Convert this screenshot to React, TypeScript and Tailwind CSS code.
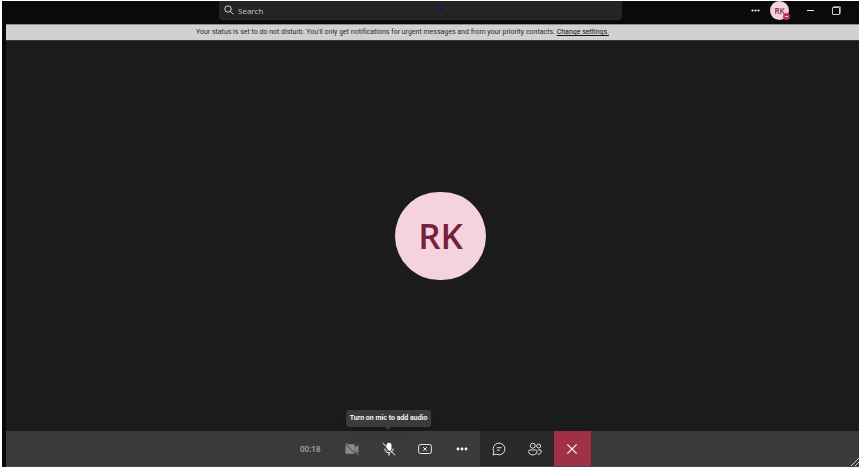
import type { ReactNode } from 'react'

const tools = [
  { id: 'camera', label: 'Turn camera on', icon: <CameraOffIcon /> },
  { id: 'mic', label: 'Unmute', icon: <MicOffIcon />, tip: 'Turn on mic to add audio' },
  { id: 'share', label: 'Stop sharing', icon: <StopShareIcon /> },
  { id: 'more', label: 'More actions', icon: <DotsIcon className="h-1 w-3" /> },
]

function SearchIcon() {
  return (
    <svg viewBox="0 0 10 10" className="h-[10px] w-[10px] shrink-0" fill="none" stroke="#d6d6d6" strokeWidth="1">
      <circle cx="4" cy="4" r="3.2" />
      <path d="M6.3 6.3 9.4 9.4" />
    </svg>
  )
}

function DotsIcon({ className }: { className: string }) {
  return (
    <svg viewBox="0 0 12 4" className={className} fill="#fff">
      <circle cx="2" cy="2" r="1.4" />
      <circle cx="6" cy="2" r="1.4" />
      <circle cx="10" cy="2" r="1.4" />
    </svg>
  )
}

function CameraOffIcon() {
  return (
    <svg viewBox="0 0 14 14" className="h-[14px] w-[14px]" fill="#8d8c8b">
      <path d="M1.8 2.2h6.6c.8 0 1.4.6 1.4 1.4v6.800c0 .8-.6 1.400-1.400 1.400H1.800C1 11.800.4 11.200.4 10.400V3.600c0-.8.6-1.400 1.400-1.400z" />
      <path d="M10.300 5.300 13.400 2.800v8.400l-3.100-2.500z" />
      <path d="M.2 1.800 12.600 14" stroke="#3b3b3b" strokeWidth="1" />
      <path d="M.8.8 13.400 13.200" stroke="#8d8c8b" strokeWidth="1" />
    </svg>
  )
}

function MicOffIcon() {
  return (
    <svg viewBox="0 0 14 14" className="h-[14px] w-[14px]" fill="none">
      <rect x="4.500" y=".8" width="5" height="8.200" rx="2.500" fill="#fff" />
      <path d="M2.800 6.600c0 2.500 1.800 4.200 4.200 4.200s4.200-1.700 4.200-4.200M7 10.800v2.800" stroke="#fff" strokeWidth="1" />
      <path d="M0 1.800 12 13.800" stroke="#3b3b3b" strokeWidth="1" />
      <path d="M.7 1 13.200 13.400" stroke="#fff" strokeWidth="1" />
    </svg>
  )
}

function StopShareIcon() {
  return (
    <svg viewBox="0 0 14 12" className="h-3 w-[14px]" fill="none" stroke="#e6e6e6" strokeWidth="1">
      <rect x=".6" y="1.500" width="12.800" height="9" rx="1.800" />
      <path d="M5.200 4.200l3.600 3.600M8.800 4.200 5.200 7.800" />
    </svg>
  )
}

function ChatIcon() {
  return (
    <svg viewBox="0 0 14 14" className="h-[14px] w-[14px]" fill="none" stroke="#e4e4e4" strokeWidth="1">
      <path d="M1 13l.9-3.100A5.900 5.900 0 1 1 4.300 12.200z" strokeLinejoin="round" />
      <path d="M4.800 5.700h4.800M4.800 8.200h3" />
    </svg>
  )
}

function PeopleIcon() {
  return (
    <svg viewBox="0 0 14 14" className="h-[14px] w-[14px]" fill="none" stroke="#e4e4e4" strokeWidth="1">
      <circle cx="4.800" cy="3.700" r="2.500" />
      <circle cx="10.700" cy="4" r="2" />
      <path d="M1.700 8h6.200c.6 0 1 .4 1 1v.6c0 2-1.700 3.300-4.100 3.300S.7 11.600.7 9.600V9c0-.6.400-1 1-1zM10 8h2.300c.6 0 1 .4 1 1 0 2.100-1.200 3.300-3.600 3.300" />
    </svg>
  )
}

function CloseIcon() {
  return (
    <svg viewBox="0 0 12 12" className="h-3 w-3" fill="none" stroke="#fff" strokeWidth="1.200">
      <path d="M1.300 1.300l9.400 9.400M10.700 1.300l-9.400 9.400" />
    </svg>
  )
}

function BarButton({ label, className = '', children }: { label: string; className?: string; children: ReactNode }) {
  return (
    <button type="button" aria-label={label} className={`relative flex items-center justify-center ${className}`}>
      {children}
    </button>
  )
}

function TitleBar() {
  return (
    <header className="flex h-[23px] items-start bg-[#0a0a0a]">
      <div className="flex-1" />
      <label className="relative flex h-[19px] w-[403px] items-center gap-1 rounded-b-sm border-b border-[#2e2e2e] bg-[#242424] pl-[5px]">
        <SearchIcon />
        <input
          type="search"
          aria-label="Search"
          placeholder="Search"
          className="w-full bg-transparent pt-px text-[8px] leading-3 outline-none placeholder:text-[#c8c8c8]"
        />
        <span className="absolute left-[221px] top-[7px] h-[2px] w-[2px] bg-[#0000e6]" />
      </label>
      <div className="flex h-[19px] w-[237px] items-center justify-end pr-[18px]">
        <button type="button" aria-label="Settings and more">
          <DotsIcon className="h-[3px] w-[9px]" />
        </button>
        <button
          type="button"
          aria-label="Account"
          className="relative ml-[10px] h-[19px] w-[19px] rounded-full bg-[#f4d3de] text-[8px] font-semibold leading-[19px] text-[#7a2644]"
        >
          RK
          <span className="absolute -right-px bottom-0 flex h-[7px] w-[7px] items-center justify-center rounded-full bg-[#c4314b]">
            <span className="h-px w-[3px] bg-[#f4d3de]" />
          </span>
        </button>
        <button type="button" aria-label="Minimize" className="ml-[18px] h-px w-[7px] bg-[#e8e8e8]" />
        <button type="button" aria-label="Restore" className="ml-[18px]">
          <svg viewBox="0 0 9 9" className="h-[9px] w-[9px]" fill="none" stroke="#d0d0d0" strokeWidth="1">
            <rect x=".5" y="1.500" width="7" height="7" rx=".5" />
            <path d="M1.500.5H8c.3 0 .5.2.5.5v6.500" stroke="#8a8a8a" />
          </svg>
        </button>
      </div>
    </header>
  )
}

export default function App() {
  return (
    <div className="flex h-screen flex-col bg-white pb-[2px] pl-[2px] pt-px font-['Open_Sans','Noto_Sans',sans-serif]">
      <TitleBar />
      <div className="flex min-h-0 flex-1 flex-col border-l-4 border-[#080808]">
        <div className="h-[17px] border-y border-b-[#3a3a3a] border-t-[#8e8e8e] bg-[#d1d1d1] pr-[60px] text-center font-['Roboto',sans-serif] text-[7px] leading-[15px] text-[#2d2d2d]">
          Your status is set to do not disturb. You'll only get notifications for urgent messages and from your priority
          contacts.{' '}
          <a href="#settings" className="text-[#151515] underline">
            Change settings.
          </a>
        </div>

        <main className="flex flex-1 items-center justify-center bg-[#1b1b1b] pl-4">
          <div className="flex h-[88px] w-[91px] items-center justify-center rounded-full bg-[#f4d3de] text-[35px] font-semibold text-[#76203f]">
            RK
          </div>
        </main>

        <footer className="relative flex h-9 justify-center border-b border-[#4a4948] bg-[#3c3a38]">
          <time className="w-[59px] pr-[13px] text-right text-[8px] font-semibold leading-9 text-[#a9a8a6]">00:18</time>
          <div className="grid w-[257px] grid-cols-7">
            {tools.map((tool) => (
              <BarButton key={tool.id} label={tool.label} className="bg-[#3b3b3b]">
                {tool.icon}
                {tool.tip && (
                  <span
                    role="tooltip"
                    className="absolute bottom-[39px] left-1/2 -translate-x-1/2 whitespace-nowrap rounded-[3px] bg-[#3b3b3b] px-1 font-['Roboto',sans-serif] text-[7px] font-semibold leading-[17px] text-white shadow-lg"
                  >
                    {tool.tip}
                    <span className="absolute left-1/2 top-full -translate-x-1/2 border-x-[3px] border-t-[3px] border-x-transparent border-t-[#3b3b3b]" />
                  </span>
                )}
              </BarButton>
            ))}
            <BarButton label="Show conversation" className="bg-[#292929]">
              <ChatIcon />
            </BarButton>
            <BarButton label="Show participants" className="bg-[#292929]">
              <PeopleIcon />
            </BarButton>
            <BarButton label="Leave" className="bg-[#a03045]">
              <CloseIcon />
            </BarButton>
          </div>
          <svg viewBox="0 0 8 8" className="absolute bottom-0 right-0 h-2 w-2" stroke="#c9c9c9" strokeWidth="1">
            <path d="M0 8 8 0M4 8 8 4" />
          </svg>
        </footer>
      </div>
    </div>
  )
}
